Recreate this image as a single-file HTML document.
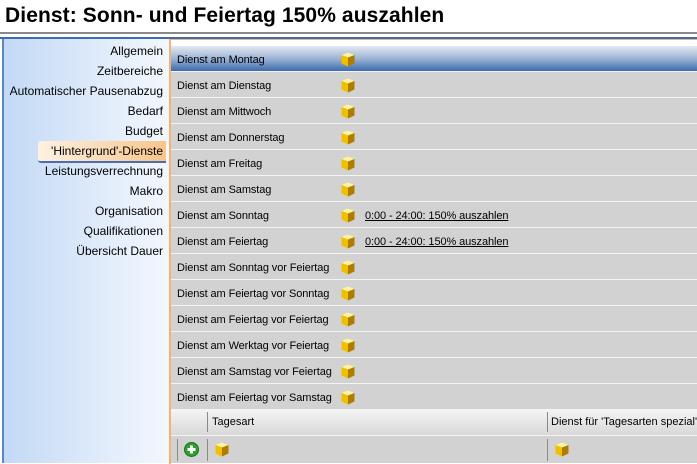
<!DOCTYPE html>
<html><head><meta charset="utf-8"><style>
body{margin:0;width:697px;height:463px;overflow:hidden;background:#fff;font-family:"Liberation Sans",Tahoma,sans-serif;position:relative}
.title{position:absolute;left:5px;top:4px;font-size:21px;font-weight:bold;color:#000;letter-spacing:0.1px}
.hl1{position:absolute;left:0;top:32px;width:697px;height:2px;background:#8a8a8a}
.hl2{position:absolute;left:0;top:37px;width:697px;height:2px;background:#3c6db0}
.left{position:absolute;left:2px;top:39px;width:166px;height:424px;background:linear-gradient(to right,#c3d9f5,#eaf2fc 80%,#f3f7fd);border-left:2px solid #5b86c4}
.mi{position:absolute;font-size:12px;color:#000;text-align:right;white-space:nowrap}
.sel{position:absolute;left:38px;top:141px;width:128px;height:20px;background:linear-gradient(to right,#fdf1e3,#f8c58a);border-radius:3px 0 0 3px;border-bottom:2px solid #4a6fb0}
.right{position:absolute;left:169px;top:39px;width:528px;height:424px;border-left:2px solid #f2b470;border-top:1px solid #f2b470;background:#fff}
.row{position:absolute;left:171px;width:526px;height:25px;background:#d2d2d2;border-bottom:1px solid #f4f4f4;font-size:11px;letter-spacing:-0.1px;white-space:nowrap}
.row .t{position:absolute;left:6px;top:8px}
.row.s{background:linear-gradient(#e4e9f1,#9db4d4 50%,#3c6cae)}
.cube{position:absolute;width:14px;height:15px}
.row .lnk{position:absolute;left:194px;top:8px;text-decoration:underline}
.hdr{position:absolute;left:171px;top:410px;width:526px;height:25px;background:linear-gradient(#f4f4f4,#d8d8d8);border-bottom:1px solid #f4f4f4;font-size:11px;white-space:nowrap}
.brow{position:absolute;left:171px;top:436px;width:526px;height:27px;background:#d2d2d2}
.vs{position:absolute;width:1px;background:#8a8a8a}
</style></head><body>
<svg width="0" height="0" style="position:absolute"><defs><g id="c"><polygon points="0.5,3 7,0.5 13.5,3 7,5.5" fill="#fff3a0"/><polygon points="0.5,3 7,5.5 7,14.5 0.5,11.5" fill="#f0c000"/><polygon points="7,5.5 13.5,3 13.5,11.5 7,14.5" fill="#b07c00"/></g></defs></svg>
<div class="title">Dienst: Sonn- und Feiertag 150% auszahlen</div>
<div class="hl1"></div><div class="hl2"></div>
<div class="left"></div>
<div class="sel"></div>
<div class="mi" style="top:44px;right:534px">Allgemein</div>
<div class="mi" style="top:64px;right:534px">Zeitbereiche</div>
<div class="mi" style="top:84px;right:534px">Automatischer Pausenabzug</div>
<div class="mi" style="top:104px;right:534px">Bedarf</div>
<div class="mi" style="top:124px;right:534px">Budget</div>
<div class="mi" style="top:144px;right:534px">'Hintergrund'-Dienste</div>
<div class="mi" style="top:164px;right:534px">Leistungsverrechnung</div>
<div class="mi" style="top:184px;right:534px">Makro</div>
<div class="mi" style="top:204px;right:534px">Organisation</div>
<div class="mi" style="top:224px;right:534px">Qualifikationen</div>
<div class="mi" style="top:244px;right:534px">Übersicht Dauer</div>
<div class="right"></div>

<div class="row s" style="top:46px"><span class="t">Dienst am Montag</span><svg class="cube" style="left:170px;top:6px"><use href="#c"/></svg></div>
<div class="row" style="top:72px"><span class="t">Dienst am Dienstag</span><svg class="cube" style="left:170px;top:6px"><use href="#c"/></svg></div>
<div class="row" style="top:98px"><span class="t">Dienst am Mittwoch</span><svg class="cube" style="left:170px;top:6px"><use href="#c"/></svg></div>
<div class="row" style="top:124px"><span class="t">Dienst am Donnerstag</span><svg class="cube" style="left:170px;top:6px"><use href="#c"/></svg></div>
<div class="row" style="top:150px"><span class="t">Dienst am Freitag</span><svg class="cube" style="left:170px;top:6px"><use href="#c"/></svg></div>
<div class="row" style="top:176px"><span class="t">Dienst am Samstag</span><svg class="cube" style="left:170px;top:6px"><use href="#c"/></svg></div>
<div class="row" style="top:202px"><span class="t">Dienst am Sonntag</span><svg class="cube" style="left:170px;top:6px"><use href="#c"/></svg><span class="lnk">0:00 - 24:00: 150% auszahlen</span></div>
<div class="row" style="top:228px"><span class="t">Dienst am Feiertag</span><svg class="cube" style="left:170px;top:6px"><use href="#c"/></svg><span class="lnk">0:00 - 24:00: 150% auszahlen</span></div>
<div class="row" style="top:254px"><span class="t">Dienst am Sonntag vor Feiertag</span><svg class="cube" style="left:170px;top:6px"><use href="#c"/></svg></div>
<div class="row" style="top:280px"><span class="t">Dienst am Feiertag vor Sonntag</span><svg class="cube" style="left:170px;top:6px"><use href="#c"/></svg></div>
<div class="row" style="top:306px"><span class="t">Dienst am Feiertag vor Feiertag</span><svg class="cube" style="left:170px;top:6px"><use href="#c"/></svg></div>
<div class="row" style="top:332px"><span class="t">Dienst am Werktag vor Feiertag</span><svg class="cube" style="left:170px;top:6px"><use href="#c"/></svg></div>
<div class="row" style="top:358px"><span class="t">Dienst am Samstag vor Feiertag</span><svg class="cube" style="left:170px;top:6px"><use href="#c"/></svg></div>
<div class="row" style="top:384px"><span class="t">Dienst am Feiertag vor Samstag</span><svg class="cube" style="left:170px;top:6px"><use href="#c"/></svg></div>

<div class="hdr"><span style="position:absolute;left:41px;top:6px">Tagesart</span><span style="position:absolute;left:380px;top:6px">Dienst für 'Tagesarten spezial'</span>
<div class="vs" style="left:36px;top:2px;height:20px"></div><div class="vs" style="left:376px;top:2px;height:20px"></div></div>
<div class="brow">
<div class="vs" style="left:6px;top:3px;height:22px"></div><div class="vs" style="left:36px;top:3px;height:22px"></div><div class="vs" style="left:376px;top:3px;height:22px"></div>
<svg style="position:absolute;left:13px;top:6px" width="15" height="15"><circle cx="7.5" cy="7.5" r="7" fill="#2e9e2e" stroke="#1d6e1d"/><rect x="3.5" y="6" width="8" height="3" fill="#fff"/><rect x="6" y="3.5" width="3" height="8" fill="#fff"/></svg>
<svg class="cube" style="left:44px;top:6px"><use href="#c"/></svg>
<svg class="cube" style="left:384px;top:6px"><use href="#c"/></svg>
</div>
</body></html>
